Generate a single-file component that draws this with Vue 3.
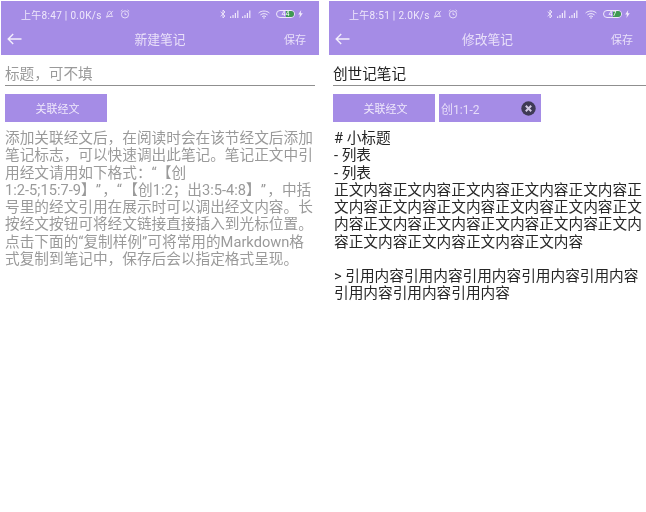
<script setup>
const screens = [
  { time: '上午8:47 | 0.0K/s', batt: '44', title: '新建笔记', pad: 'left' },
  { time: '上午8:51 | 2.0K/s', batt: '47', title: '修改笔记', pad: 'right' }
]
const hint = [
  '添加关联经文后，在阅读时会在该节经文后添加',
  '笔记标志，可以快速调出此笔记。笔记正文中引',
  '用经文请用如下格式：“【创',
  '1:2-5;15:7-9】”，“【创1:2；出3:5-4:8】”，中括',
  '号里的经文引用在展示时可以调出经文内容。长',
  '按经文按钮可将经文链接直接插入到光标位置。',
  '点击下面的“复制样例”可将常用的Markdown格',
  '式复制到笔记中，保存后会以指定格式呈现。'
]
const note = [
  '# 小标题',
  '- 列表',
  '- 列表',
  '正文内容正文内容正文内容正文内容正文内容正',
  '文内容正文内容正文内容正文内容正文内容正文',
  '内容正文内容正文内容正文内容正文内容正文内',
  '容正文内容正文内容正文内容正文内容',
  '\u00a0',
  '> 引用内容引用内容引用内容引用内容引用内容',
  '引用内容引用内容引用内容'
]
// Only the line of verse examples has slightly looser quote marks.
const parts = (l) => (l.includes('出3') ? l.split(/([“”])/) : [l])
</script>

<template>
  <div class="page">
    <section v-for="(s, i) in screens" :key="s.title" class="screen" :class="s.pad">
      <header class="appbar">
        <div class="status">
          <span class="time">{{ s.time }}</span>
          <svg class="ico" width="9" height="9" viewBox="0 0 10 10" fill="none" stroke="#e6dcf8" stroke-width="1">
            <path d="M5 1.5C3.4 1.5 2.8 2.8 2.8 4.2 2.8 5.8 2 6.5 1.5 7.2H8.5C8 6.5 7.2 5.8 7.2 4.2 7.2 2.8 6.6 1.5 5 1.5ZM1.5 9 8.8 1" />
          </svg>
          <svg class="ico alarm" width="10" height="10" viewBox="0 0 10 10" fill="none" stroke="#e6dcf8" stroke-width="1">
            <circle cx="5" cy="5.4" r="3.6" />
            <path d="M5 3.6V5.6H6.5M.8 2.4 2.4.9M9.2 2.4 7.6.9" />
          </svg>
          <span class="grow"></span>
          <svg class="ico" width="6" height="10" viewBox="0 0 6 10" fill="none" stroke="#efe8fb" stroke-width=".9">
            <path d="M.6 2.8 5 7 3 9V1L5 3 .6 7.2" />
          </svg>
          <svg v-for="n in 2" :key="n" class="ico sig" width="11" height="8" viewBox="0 0 11 8" fill="#efe8fb">
            <rect x="0" y="6.4" width="1.2" height="1.6" />
            <rect x="2.4" y="5" width="1.2" height="3" />
            <rect x="4.8" y="3" width="1.2" height="5" />
            <rect x="7.2" y=".5" width="1.2" height="7.5" />
          </svg>
          <svg class="ico wifi" width="12" height="9" viewBox="0 0 12 9" fill="none" stroke="#efe8fb" stroke-width="1">
            <path d="M.6 3C3.6.4 8.4.4 11.4 3M2.4 4.9C4.4 3.2 7.6 3.2 9.6 4.9M4 6.7C5.1 5.8 6.9 5.8 8 6.7" />
            <circle cx="6" cy="8" r=".8" fill="#efe8fb" stroke="none" />
          </svg>
          <span class="batt"><i class="fill"></i><b>{{ s.batt }}</b></span>
          <svg class="ico bolt" width="5" height="8" viewBox="0 0 5 8" fill="#efe8fb"><path d="M3.2 0 .2 4.6H2L1.4 8 4.8 3.2H2.8Z" /></svg>
        </div>
        <div class="bar">
          <svg class="back" width="15" height="12" viewBox="0 0 15 12" fill="none" stroke="#f3eefc" stroke-width="1.4">
            <path d="M14.5 6H1.2M6.2 1 1.2 6 6.2 11" />
          </svg>
          <span class="title">{{ s.title }}</span>
          <span class="save">保存</span>
        </div>
      </header>
      <main class="body">
        <div class="input" :class="{ filled: i === 1 }">{{ i === 1 ? '创世记笔记' : '标题，可不填' }}</div>
        <div class="buttons">
          <div class="btn link">关联经文</div>
          <div v-if="i === 1" class="btn chip">
            <span>创1:1-2</span>
            <svg width="15" height="15" viewBox="0 0 15 15">
              <circle cx="7.5" cy="7.5" r="7.2" fill="#3f3a55" />
              <path d="M4.8 4.8 10.2 10.2M10.2 4.8 4.8 10.2" stroke="#d2cae4" stroke-width="2" />
            </svg>
          </div>
        </div>
        <div class="text" :class="{ dark: i === 1 }">
          <div v-for="(l, k) in (i === 1 ? note : hint)" :key="k" class="line">
            <span v-for="(p, m) in parts(l)" :key="m" :class="{ loose: p === '“' || p === '”' }">{{ p }}</span>
          </div>
        </div>
      </main>
    </section>
  </div>
</template>

<style scoped>
.page {
  display: flex;
  width: 646px;
  height: 512px;
  background: #fff;
  font-family: Roboto, "Noto Sans CJK SC", sans-serif;
  text-spacing-trim: space-all;
  overflow: hidden;
  filter: blur(0.3px);
}
.screen { width: 318px; padding-top: 1px; }
.screen.left { margin-left: 1px; }
.screen.right { margin-left: 10px; width: 317px; }
.appbar {
  height: 54px;
  background: #a58ce6;
  color: #efe8fb;
  display: flex;
  flex-direction: column;
}
.status {
  height: 26px;
  display: flex;
  align-items: center;
  padding: 0 16px 0 20px;
  font-size: 10px;
  letter-spacing: 0.3px;
  white-space: nowrap;
}
.ico { margin-left: 3px; flex: none; }
.alarm { margin-left: 6px; }
.sig { margin-left: 4px; }
.sig + .sig { margin-left: 1px; }
.wifi { margin-left: 5px; }
.bolt { margin-left: 3px; }
.grow { flex: 1; }
.batt {
  position: relative;
  width: 19px;
  height: 8px;
  margin-left: 6px;
  border: 1px solid #efe8fb;
  border-radius: 5px;
  box-sizing: border-box;
  overflow: hidden;
}
.batt .fill {
  position: absolute;
  right: 0;
  top: 0;
  bottom: 0;
  width: 50%;
  background: #3f9a52;
}
.batt b {
  position: absolute;
  left: 0;
  right: 0;
  top: -2px;
  text-align: center;
  font-size: 7px;
  line-height: 10px;
  font-weight: 400;
  letter-spacing: 0;
  color: #fff;
}
.bar {
  position: relative;
  height: 28px;
  padding: 0 13px 4px 6px;
  box-sizing: border-box;
  display: flex;
  align-items: center;
  justify-content: space-between;
}
.title {
  position: absolute;
  left: 0;
  right: 0;
  margin-top: -2px;
  text-align: center;
  font-size: 12.75px;
  color: #e9e0f9;
}
.save { font-size: 11px; color: #e9e0f9; }
.body { padding: 8px 4px 0; }
.right .body { padding-right: 0; }
.input {
  height: 22px;
  line-height: 22px;
  font-size: 14.6px;
  color: #9a9a9a;
  border-bottom: 1px solid #8f8f8f;
}
.input.filled { color: #222; }
.buttons { display: flex; gap: 4px; margin-top: 8px; }
.btn {
  width: 102px;
  height: 28px;
  display: flex;
  align-items: center;
  justify-content: center;
  background: #a58ce6;
  color: #efe8fb;
  font-size: 11px;
  box-sizing: border-box;
}
.link { padding-left: 3px; }
.chip {
  justify-content: space-between;
  padding: 0 5px 0 2px;
  font-size: 12px;
  color: #e6dcf8;
}
.text {
  margin-top: 8px;
  font-size: 14.67px;
  line-height: 17.25px;
  color: #9a9a9a;
  white-space: nowrap;
}
.right .text { padding-left: 1px; }
.loose { letter-spacing: 1.3px; }
.text.dark { color: #262626; }
</style>
